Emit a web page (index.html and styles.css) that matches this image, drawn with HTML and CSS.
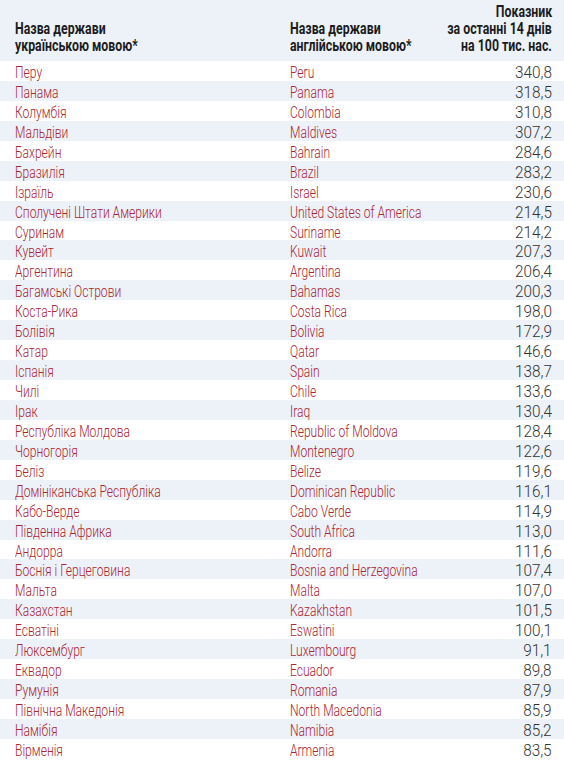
FILE: index.html
```html
<!DOCTYPE html>
<html lang="uk">
<head>
<meta charset="utf-8">
<link rel="stylesheet" href="styles.css">
</head>
<body>
<div class="table">
  <div class="head">
    <div class="h-name"><span class="hl">Назва держави</span><br><span class="hl">українською мовою*</span></div>
    <div class="h-name"><span class="hl">Назва держави</span><br><span class="hl">англійською мовою*</span></div>
    <div class="h-val"><span class="hr">Показник</span><br><span class="hr">за останні 14 днів</span><br><span class="hr">на 100 тис. нас.</span></div>
  </div>
  <div class="row"><span class="ua">Перу</span><span class="en">Peru</span><span class="val">340,8</span></div>
  <div class="row"><span class="ua">Панама</span><span class="en">Panama</span><span class="val">318,5</span></div>
  <div class="row"><span class="ua">Колумбія</span><span class="en">Colombia</span><span class="val">310,8</span></div>
  <div class="row"><span class="ua">Мальдіви</span><span class="en">Maldives</span><span class="val">307,2</span></div>
  <div class="row"><span class="ua">Бахрейн</span><span class="en">Bahrain</span><span class="val">284,6</span></div>
  <div class="row"><span class="ua">Бразилія</span><span class="en">Brazil</span><span class="val">283,2</span></div>
  <div class="row"><span class="ua">Ізраїль</span><span class="en">Israel</span><span class="val">230,6</span></div>
  <div class="row"><span class="ua">Сполучені Штати Америки</span><span class="en">United States of America</span><span class="val">214,5</span></div>
  <div class="row"><span class="ua">Суринам</span><span class="en">Suriname</span><span class="val">214,2</span></div>
  <div class="row"><span class="ua">Кувейт</span><span class="en">Kuwait</span><span class="val">207,3</span></div>
  <div class="row"><span class="ua">Аргентина</span><span class="en">Argentina</span><span class="val">206,4</span></div>
  <div class="row"><span class="ua">Багамські Острови</span><span class="en">Bahamas</span><span class="val">200,3</span></div>
  <div class="row"><span class="ua">Коста-Рика</span><span class="en">Costa Rica</span><span class="val">198,0</span></div>
  <div class="row"><span class="ua">Болівія</span><span class="en">Bolivia</span><span class="val">172,9</span></div>
  <div class="row"><span class="ua">Катар</span><span class="en">Qatar</span><span class="val">146,6</span></div>
  <div class="row"><span class="ua">Іспанія</span><span class="en">Spain</span><span class="val">138,7</span></div>
  <div class="row"><span class="ua">Чилі</span><span class="en">Chile</span><span class="val">133,6</span></div>
  <div class="row"><span class="ua">Ірак</span><span class="en">Iraq</span><span class="val">130,4</span></div>
  <div class="row"><span class="ua">Республіка Молдова</span><span class="en">Republic of Moldova</span><span class="val">128,4</span></div>
  <div class="row"><span class="ua">Чорногорія</span><span class="en">Montenegro</span><span class="val">122,6</span></div>
  <div class="row"><span class="ua">Беліз</span><span class="en">Belize</span><span class="val">119,6</span></div>
  <div class="row"><span class="ua">Домініканська Республіка</span><span class="en">Dominican Republic</span><span class="val">116,1</span></div>
  <div class="row"><span class="ua">Кабо-Верде</span><span class="en">Cabo Verde</span><span class="val">114,9</span></div>
  <div class="row"><span class="ua">Південна Африка</span><span class="en">South Africa</span><span class="val">113,0</span></div>
  <div class="row"><span class="ua">Андорра</span><span class="en">Andorra</span><span class="val">111,6</span></div>
  <div class="row"><span class="ua">Боснія і Герцеговина</span><span class="en">Bosnia and Herzegovina</span><span class="val">107,4</span></div>
  <div class="row"><span class="ua">Мальта</span><span class="en">Malta</span><span class="val">107,0</span></div>
  <div class="row"><span class="ua">Казахстан</span><span class="en">Kazakhstan</span><span class="val">101,5</span></div>
  <div class="row"><span class="ua">Есватіні</span><span class="en">Eswatini</span><span class="val">100,1</span></div>
  <div class="row"><span class="ua">Люксембург</span><span class="en">Luxembourg</span><span class="val">91,1</span></div>
  <div class="row"><span class="ua">Еквадор</span><span class="en">Ecuador</span><span class="val">89,8</span></div>
  <div class="row"><span class="ua">Румунія</span><span class="en">Romania</span><span class="val">87,9</span></div>
  <div class="row"><span class="ua">Північна Македонія</span><span class="en">North Macedonia</span><span class="val">85,9</span></div>
  <div class="row"><span class="ua">Намібія</span><span class="en">Namibia</span><span class="val">85,2</span></div>
  <div class="row"><span class="ua">Вірменія</span><span class="en">Armenia</span><span class="val">83,5</span></div>
</div>
</body>
</html>
```
FILE: styles.css
```css
html, body {
  margin: 0;
  padding: 0;
  background: #ffffff;
}
.table {
  width: 564px;
  font-family: Roboto, "Liberation Sans", sans-serif;
}
.head {
  display: grid;
  grid-template-columns: 275px minmax(0, 1fr) auto;
  align-items: end;
  height: 61px;
  box-sizing: border-box;
  padding: 0 12px 7.5px 15px;
  background: #edf2f9;
  font-weight: 700;
  font-size: 16px;
  line-height: 17px;
  color: #1c1c1c;
}
.h-val {
  text-align: right;
}
.hl, .hr {
  display: inline-block;
  white-space: nowrap;
  transform: scaleX(0.77);
}
.hl {
  transform-origin: left center;
}
.hr {
  transform-origin: right center;
}
.row {
  display: grid;
  grid-template-columns: 275px minmax(0, 1fr) auto;
  height: 19.94px;
  box-sizing: border-box;
  align-items: start;
  padding: 2px 12px 0 15px;
  font-weight: 300;
  font-size: 17px;
  line-height: 19.94px;
}
.row:nth-child(odd) {
  background: #edf2f9;
}
.ua, .en {
  color: #ab2530;
  white-space: nowrap;
  transform: scaleX(0.71);
  transform-origin: left center;
}
.val {
  color: #333333;
  text-align: right;
  transform: scaleX(0.9);
  transform-origin: right center;
}
```
